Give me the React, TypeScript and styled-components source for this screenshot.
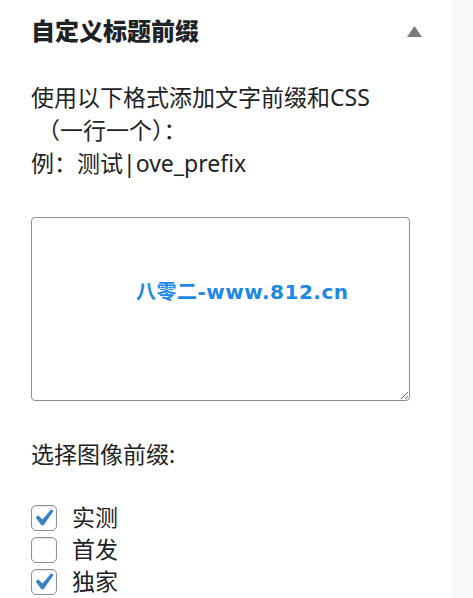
import React from "react";
import styled, { createGlobalStyle } from "styled-components";

const Global = createGlobalStyle`
  html, body, #root { height: 100%; }
  body {
    margin: 0;
    background: #ffffff;
    font-family: "Noto Sans", "Noto Sans CJK SC", sans-serif;
    color: #1d2327;
  }
`;

const Page = styled.div`
  display: flex;
  height: 100%;
  min-height: 598px;
`;

const Panel = styled.div`
  flex: 1;
  background: #ffffff;
  padding: 14px 30px 0 31px;
  box-sizing: border-box;
`;

const Strip = styled.div`
  width: 21px;
  background: #f9f9f9;
`;

const HeaderRow = styled.div`
  display: flex;
  align-items: center;
  justify-content: space-between;
`;

const Title = styled.h2`
  margin: 0;
  font-size: 24px;
  line-height: 33px;
  font-weight: 800;
  color: #1d2327;
  font-family: "Noto Sans", "Noto Sans CJK SC", sans-serif;
`;

const Toggle = styled.svg`
  width: 15px;
  height: 11px;
  margin-top: 1px;
`;

const Desc = styled.p`
  margin: 34px 0 0;
  font-size: 23px;
  line-height: 33px;
`;

const Indent = styled.span`
  padding-left: 6px;
`;

const AreaWrap = styled.div`
  position: relative;
  width: 379px;
  height: 184px;
  margin-top: 37px;
`;

const Area = styled.textarea`
  display: block;
  width: 100%;
  height: 100%;
  box-sizing: border-box;
  border: 1px solid #8c8f94;
  border-radius: 4px;
  resize: vertical;
  background: #fff;
  padding: 2px 8px;
  font-family: "Noto Sans", sans-serif;
  font-size: 14px;
  outline: none;
`;

const Watermark = styled.div`
  position: absolute;
  left: 105px;
  top: 59px;
  font-family: "DejaVu Sans", "Noto Sans CJK SC", sans-serif;
  font-size: 20px;
  font-weight: 700;
  color: #1e88e5;
  letter-spacing: 0.5px;
  pointer-events: none;
  white-space: nowrap;
`;

const Label = styled.p`
  margin: 37px 0 0;
  font-size: 23px;
  line-height: 33px;
`;

const List = styled.div`
  margin-top: 34px;
  display: flex;
  flex-direction: column;
  gap: 6px;
`;

const Row = styled.label`
  display: flex;
  align-items: center;
  gap: 15px;
  font-size: 23px;
  line-height: 26px;
  height: 26px;
`;

const Box = styled.span`
  width: 26px;
  height: 26px;
  box-sizing: border-box;
  border: 1px solid #8c8f94;
  border-radius: 5px;
  background: #fff;
  box-shadow: inset 0 1px 2px rgba(0, 0, 0, 0.1);
  display: flex;
  align-items: center;
  justify-content: center;
  flex: none;
  overflow: visible;
`;

const Check = styled.svg`
  flex: none;
  width: 34px;
  height: 34px;
  margin: 0 0 0 -2px;
`;

const Text = styled.span`
  margin-top: -2px;
`;

type Item = { label: string; checked: boolean };
const items: Item[] = [
  { label: "实测", checked: true },
  { label: "首发", checked: false },
  { label: "独家", checked: true },
];

export default function App() {
  return (
    <>
      <Global />
      <Page>
        <Panel>
          <HeaderRow>
            <Title>自定义标题前缀</Title>
            <Toggle viewBox="0 0 15 11">
              <polygon points="7.5,0 15,11 0,11" fill="#787c82" />
            </Toggle>
          </HeaderRow>
          <Desc>
            使用以下格式添加文字前缀和CSS
            <br />
            <Indent>（一行一个）：</Indent>
            <br />
            例：测试|ove_prefix
          </Desc>
          <AreaWrap>
            <Area />
            <Watermark>八零二-www.812.cn</Watermark>
          </AreaWrap>
          <Label>选择图像前缀:</Label>
          <List>
            {items.map((it) => (
              <Row key={it.label}>
                <Box>
                  {it.checked && (
                    <Check viewBox="0 0 20 20">
                      <path
                        d="M14.83 4.89l1.34.94-5.81 8.38H9.02L5.78 9.67l1.34-1.25 2.57 2.4z"
                        fill="#3582c4"
                      />
                    </Check>
                  )}
                </Box>
                <Text>{it.label}</Text>
              </Row>
            ))}
          </List>
        </Panel>
        <Strip />
      </Page>
    </>
  );
}
